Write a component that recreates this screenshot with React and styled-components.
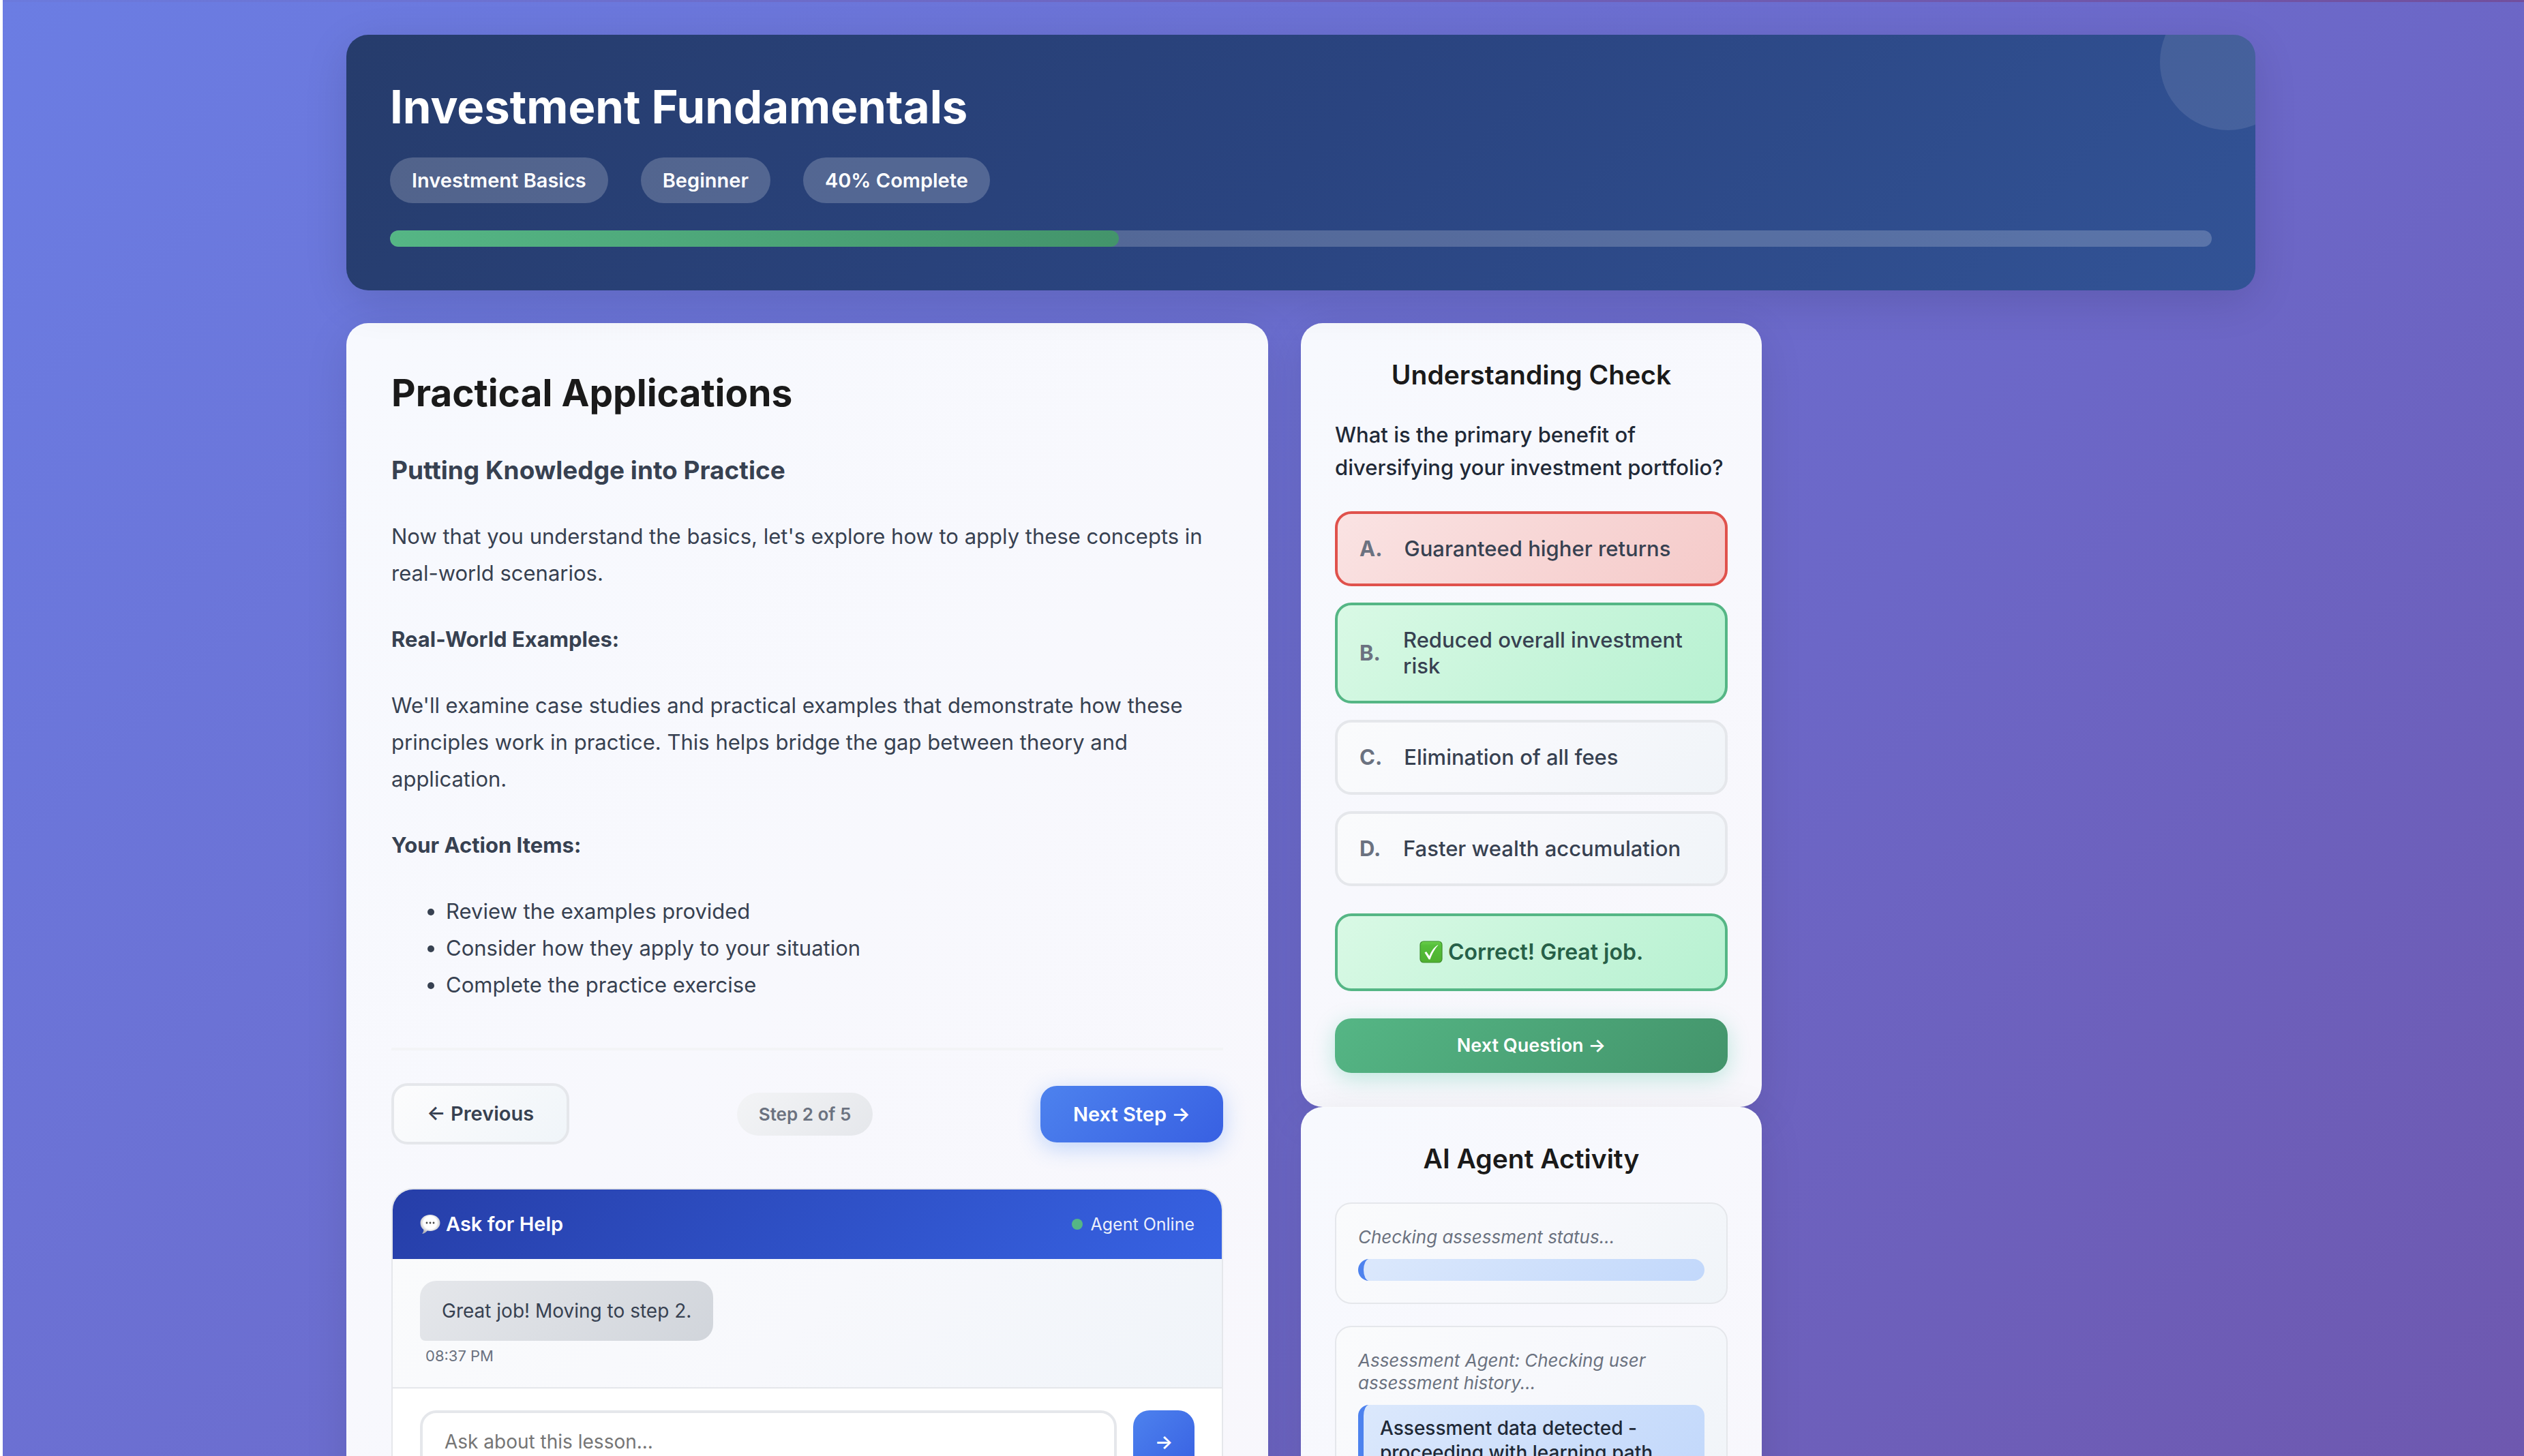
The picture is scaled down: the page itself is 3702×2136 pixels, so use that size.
import React, { useState } from "react";
import styled, { createGlobalStyle, css } from "styled-components";

const Global = createGlobalStyle`
  *, *::before, *::after { box-sizing: border-box; }
  body {
    margin: 0;
    font-family: Inter, "Liberation Sans", sans-serif;
    color: #1f2937;
    background: #ffffff;
  }
  h1, h2, h3, p, ul { margin: 0; }
  button, input { font-family: inherit; }
`;

const Page = styled.div`
  margin-left: 4px;
  padding: 3px 0 0 110px;
  height: 100vh;
  overflow: hidden;
  background:
    linear-gradient(90deg, #6b7add 0%, #6e63bd 50%, #724f9d 100%) top / 100% 3px no-repeat,
    linear-gradient(135deg, #6b7de3 0%, #6c67c7 62%, #6e58af 100%);
`;

const Container = styled.div`
  max-width: 2896px;
  margin: 0 auto;
  padding: 48px;
`;

const Header = styled.header`
  position: relative;
  overflow: hidden;
  padding: 64px;
  margin-bottom: 48px;
  border-radius: 32px;
  color: #ffffff;
  background: linear-gradient(135deg, #263c6c 0%, #2a4480 50%, #325396 100%);
  box-shadow: 0 16px 64px rgba(0, 0, 0, 0.12);
`;

const Orb = styled.span`
  position: absolute;
  top: -60px;
  right: -60px;
  width: 200px;
  height: 200px;
  border-radius: 50%;
  background: rgba(255, 255, 255, 0.1);
`;

const CourseTitle = styled.h1`
  font-size: 67px;
  line-height: 84px;
  font-weight: 700;
  margin-bottom: 32px;
`;

const Tags = styled.div`
  display: flex;
  gap: 48px;
  margin-bottom: 40px;
`;

const Tag = styled.span`
  padding: 16px 32px;
  border-radius: 40px;
  font-size: 29px;
  line-height: 35px;
  font-weight: 600;
  background: rgba(255, 255, 255, 0.2);
`;

const Track = styled.div`
  height: 24px;
  border-radius: 12px;
  overflow: hidden;
  background: rgba(255, 255, 255, 0.2);
`;

const Fill = styled.div`
  height: 100%;
  border-radius: 12px;
  background: linear-gradient(90deg, #55b685, #43946b);
`;

const Columns = styled.div`
  display: grid;
  grid-template-columns: 2fr 1fr 1fr;
  gap: 48px;
  align-items: start;
`;

const cardStyle = css`
  border: 2px solid rgba(255, 255, 255, 0.2);
  border-radius: 32px;
  background: linear-gradient(135deg, #f7f9fe, #f8f7fc) border-box;
  box-shadow: 0 16px 64px rgba(0, 0, 0, 0.1);
`;

const Lesson = styled.main`
  ${cardStyle}
  padding: 64px;
`;

const SideCard = styled.section`
  ${cardStyle}
  padding: 48px;
`;

const LessonTitle = styled.h2`
  font-size: 55px;
  line-height: 72px;
  font-weight: 700;
  color: #1a1a1a;
  margin-bottom: 48px;
`;

const LessonBody = styled.div`
  color: #374151;
  font-size: 31px;
  line-height: 54px;
`;

const Subtitle = styled.h3`
  font-size: 37px;
  line-height: 60px;
  font-weight: 700;
  margin-bottom: 40px;
`;

const Paragraph = styled.p`
  margin-bottom: 43px;
`;

const Items = styled.ul`
  padding-left: 80px;
  margin-bottom: 65px;
`;

const StepNav = styled.nav`
  display: flex;
  justify-content: space-between;
  align-items: center;
  border-top: 4px solid #f3f4f6;
  padding-top: 48px;
  margin-bottom: 64px;
`;

const PreviousButton = styled.button`
  border: 4px solid #e5e7eb;
  border-radius: 24px;
  padding: 24px 48px;
  font-size: 29px;
  line-height: 34px;
  font-weight: 600;
  color: #374151;
  background: linear-gradient(135deg, #fcfcfd, #f0f5f9);
`;

const StepPill = styled.span`
  padding: 16px 32px;
  border-radius: 40px;
  font-size: 26px;
  line-height: 31px;
  font-weight: 600;
  color: #6b7280;
  background: linear-gradient(135deg, #f3f4f6, #e5e7eb);
`;

const NextButton = styled.button`
  border: 0;
  border-radius: 24px;
  padding: 24px 48px;
  font-size: 29px;
  line-height: 35px;
  font-weight: 600;
  color: #ffffff;
  background: linear-gradient(135deg, #4d82ee, #3860e2);
  box-shadow: 0 8px 32px rgba(59, 130, 246, 0.3);
`;

const Chat = styled.section`
  border: 2px solid #e5e7eb;
  border-radius: 32px;
  overflow: hidden;
  background: #ffffff;
`;

const ChatHeader = styled.div`
  display: flex;
  justify-content: space-between;
  align-items: center;
  padding: 33px 40px;
  color: #ffffff;
  background: linear-gradient(135deg, #263ea8, #3762e3);
`;

const ChatTitle = styled.h3`
  display: flex;
  align-items: center;
  gap: 8px;
  font-size: 29px;
  line-height: 36px;
  font-weight: 600;
`;

const Status = styled.span`
  display: flex;
  align-items: center;
  gap: 12px;
  font-size: 25px;
  line-height: 32px;
  color: rgba(255, 255, 255, 0.92);
`;

const Dot = styled.span`
  width: 16px;
  height: 16px;
  border-radius: 50%;
  background: #55b685;
`;

const Messages = styled.div`
  display: flex;
  flex-direction: column;
  align-items: flex-start;
  padding: 32px 40px;
  background: linear-gradient(135deg, #fafbfc, #f7f8fc 50%, #f0f4f9);
`;

const Bubble = styled.p`
  padding: 24px 32px;
  border-radius: 24px 24px 24px 8px;
  font-size: 28px;
  line-height: 40px;
  color: #374151;
  background: linear-gradient(135deg, #e5e7eb, #d1d5db);
`;

const Time = styled.time`
  padding: 8px 8px 0;
  font-size: 22px;
  line-height: 28px;
  color: #6b7280;
`;

const Composer = styled.form`
  display: flex;
  gap: 24px;
  padding: 32px 40px;
  border-top: 2px solid #e5e7eb;
`;

const QuestionInput = styled.input`
  flex: 1;
  min-width: 0;
  height: 92px;
  padding: 0 32px;
  border: 4px solid #e5e7eb;
  border-radius: 24px;
  font-size: 28px;
  color: #374151;
  &::placeholder { color: #757575; opacity: 1; }
`;

const SendButton = styled.button`
  width: 90px;
  border: 0;
  border-radius: 24px;
  font-size: 28px;
  font-weight: 600;
  color: #ffffff;
  background: linear-gradient(135deg, #4d82ee, #3860e2);
`;

const SideTitle = styled.h2`
  font-size: 39px;
  line-height: 52px;
  font-weight: 600;
  text-align: center;
  color: #1a1a1a;
  margin-bottom: 38px;
`;

const Question = styled.p`
  font-size: 31px;
  line-height: 48px;
  font-weight: 500;
  margin-bottom: 40px;
`;

const Options = styled.div`
  display: grid;
  gap: 24px;
  margin-bottom: 40px;
`;

const tones = {
  wrong: css`
    border-color: #e0524c;
    background: linear-gradient(135deg, #fae3e3, #f5cac9);
  `,
  right: css`
    border-color: #55b685;
    background: linear-gradient(135deg, #d9f9e5, #b7f1d1);
  `,
  plain: css`
    border-color: #e5e7eb;
    background: linear-gradient(135deg, #fafbfc, #f7f8fc 50%, #f0f4f8);
  `,
};

const Option = styled.button`
  display: flex;
  align-items: center;
  gap: 32px;
  width: 100%;
  padding: 32px;
  border: 4px solid;
  border-radius: 24px;
  text-align: left;
  font-size: 31px;
  line-height: 38px;
  font-weight: 500;
  color: #374151;
  ${(p) => tones[p.$tone]}
`;

const Letter = styled.span`
  flex: 0 0 32px;
  font-weight: 700;
  color: #6b7280;
`;

const Feedback = styled.p`
  display: flex;
  justify-content: center;
  align-items: center;
  gap: 8px;
  padding: 32px;
  border: 4px solid;
  border-radius: 24px;
  margin-bottom: 40px;
  font-size: 32px;
  line-height: 42px;
  font-weight: 600;
  ${tones.right}
  color: #276048;
`;

const NextQuestion = styled.button`
  display: block;
  width: 100%;
  border: 0;
  border-radius: 24px;
  padding: 24px;
  font-size: 27px;
  line-height: 32px;
  font-weight: 600;
  color: #ffffff;
  background: linear-gradient(135deg, #55b685, #43946b);
  box-shadow: 0 8px 32px rgba(16, 185, 129, 0.25);
`;

const Activity = styled.article`
  padding: 32px;
  border: 2px solid #e5e7eb;
  border-radius: 24px;
  margin-bottom: 32px;
  background: linear-gradient(135deg, #fafbfc, #f7f8fc 50%, #f0f4f8);
`;

const ActivityLabel = styled.p`
  font-size: 26px;
  line-height: 33px;
  font-style: italic;
  color: #6b7280;
  margin-bottom: 16px;
`;

const ActivityResult = styled.div`
  padding: 16px 24px;
  border-left: 8px solid #4d82ee;
  border-radius: 16px;
  font-size: 28px;
  line-height: 36px;
  font-weight: 500;
  background: linear-gradient(135deg, #dbe8fc, #c2d8fb);
`;

const Icon = styled.svg`
  display: block;
  width: ${(p) => p.$size}px;
  height: ${(p) => p.$size}px;
`;

function BubbleIcon() {
  return (
    <Icon $size={30} viewBox="0 0 30 30" aria-hidden="true">
      <defs>
        <radialGradient id="bubble" cx="50%" cy="42%" r="55%">
          <stop offset="0.6" stopColor="#ffffff" />
          <stop offset="1" stopColor="#b4b4ba" />
        </radialGradient>
      </defs>
      <path
        d="M15 1C23 1 29.500 6 29.500 13S23 25 15 25c-1.500 0-3-.2-4.300-.5C9 26.800 6.500 28.600 3 29c1.500-1.500 2.400-3.600 2.300-6C2.200 20.800.5 17.200.5 13 .5 6 7 1 15 1Z"
        fill="url(#bubble)"
      />
      <circle cx="10" cy="13" r="1.400" fill="#444" />
      <circle cx="15" cy="13" r="1.400" fill="#444" />
      <circle cx="20" cy="13" r="1.400" fill="#444" />
    </Icon>
  );
}

function CheckIcon() {
  return (
    <Icon $size={34} viewBox="0 0 34 34" aria-hidden="true">
      <defs>
        <linearGradient id="check" x1="0" y1="0" x2="0" y2="1">
          <stop offset="0" stopColor="#6bd04c" />
          <stop offset="0.200" stopColor="#55bf3a" />
          <stop offset="1" stopColor="#4fb02f" />
        </linearGradient>
      </defs>
      <rect x="1" y="1" width="32" height="31" rx="5" fill="url(#check)" stroke="#3f8f2c" strokeWidth="1.200" />
      <path d="M7.500 17.500 10 16l4.500 6.500C17 16 20.500 10.500 26.500 6.500h1C22.500 12 18.800 18.500 15.500 27.500h-1.800Z" fill="#ffffff" />
    </Icon>
  );
}

const options = [
  { letter: "A.", text: "Guaranteed higher returns", tone: "wrong" },
  { letter: "B.", text: "Reduced overall investment risk", tone: "right" },
  { letter: "C.", text: "Elimination of all fees", tone: "plain" },
  { letter: "D.", text: "Faster wealth accumulation", tone: "plain" },
];

const activities = [
  { label: "Checking assessment status...", result: "" },
  {
    label: "Assessment Agent: Checking user assessment history...",
    result: "Assessment data detected - proceeding with learning path",
  },
];

const progress = 40;

export default function App() {
  const [draft, setDraft] = useState("");
  return (
    <>
      <Global />
      <Page>
        <Container>
          <Header>
            <Orb />
            <CourseTitle>Investment Fundamentals</CourseTitle>
            <Tags>
              <Tag>Investment Basics</Tag>
              <Tag>Beginner</Tag>
              <Tag>{progress}% Complete</Tag>
            </Tags>
            <Track role="progressbar" aria-label="Course progress" aria-valuenow={progress}>
              <Fill style={{ width: `${progress}%` }} />
            </Track>
          </Header>
          <Columns>
            <Lesson>
              <LessonTitle>Practical Applications</LessonTitle>
              <LessonBody>
                <Subtitle>Putting Knowledge into Practice</Subtitle>
                <Paragraph>
                  Now that you understand the basics, let's explore how to apply these concepts in
                  real-world scenarios.
                </Paragraph>
                <Paragraph><strong>Real-World Examples:</strong></Paragraph>
                <Paragraph>
                  We'll examine case studies and practical examples that demonstrate how these
                  principles work in practice. This helps bridge the gap between theory and
                  application.
                </Paragraph>
                <Paragraph><strong>Your Action Items:</strong></Paragraph>
                <Items>
                  <li>Review the examples provided</li>
                  <li>Consider how they apply to your situation</li>
                  <li>Complete the practice exercise</li>
                </Items>
              </LessonBody>
              <StepNav aria-label="Lesson steps">
                <PreviousButton type="button">← Previous</PreviousButton>
                <StepPill>Step 2 of 5</StepPill>
                <NextButton type="button">Next Step →</NextButton>
              </StepNav>
              <Chat>
                <ChatHeader>
                  <ChatTitle><BubbleIcon />Ask for Help</ChatTitle>
                  <Status><Dot />Agent Online</Status>
                </ChatHeader>
                <Messages>
                  <Bubble>Great job! Moving to step 2.</Bubble>
                  <Time>08:37 PM</Time>
                </Messages>
                <Composer onSubmit={(e) => e.preventDefault()}>
                  <QuestionInput
                    aria-label="Ask about this lesson"
                    placeholder="Ask about this lesson..."
                    value={draft}
                    onChange={(e) => setDraft(e.target.value)}
                  />
                  <SendButton type="submit" aria-label="Send">→</SendButton>
                </Composer>
              </Chat>
            </Lesson>
            <aside>
              <SideCard>
                <SideTitle>Understanding Check</SideTitle>
                <Question>What is the primary benefit of diversifying your investment portfolio?</Question>
                <Options>
                  {options.map((o) => (
                    <Option key={o.letter} type="button" $tone={o.tone}>
                      <Letter>{o.letter}</Letter>
                      <span>{o.text}</span>
                    </Option>
                  ))}
                </Options>
                <Feedback><CheckIcon />Correct! Great job.</Feedback>
                <NextQuestion type="button">Next Question →</NextQuestion>
              </SideCard>
              <SideCard>
                <SideTitle>AI Agent Activity</SideTitle>
                {activities.map((a) => (
                  <Activity key={a.label}>
                    <ActivityLabel>{a.label}</ActivityLabel>
                    <ActivityResult>{a.result}</ActivityResult>
                  </Activity>
                ))}
              </SideCard>
            </aside>
          </Columns>
        </Container>
      </Page>
    </>
  );
}
